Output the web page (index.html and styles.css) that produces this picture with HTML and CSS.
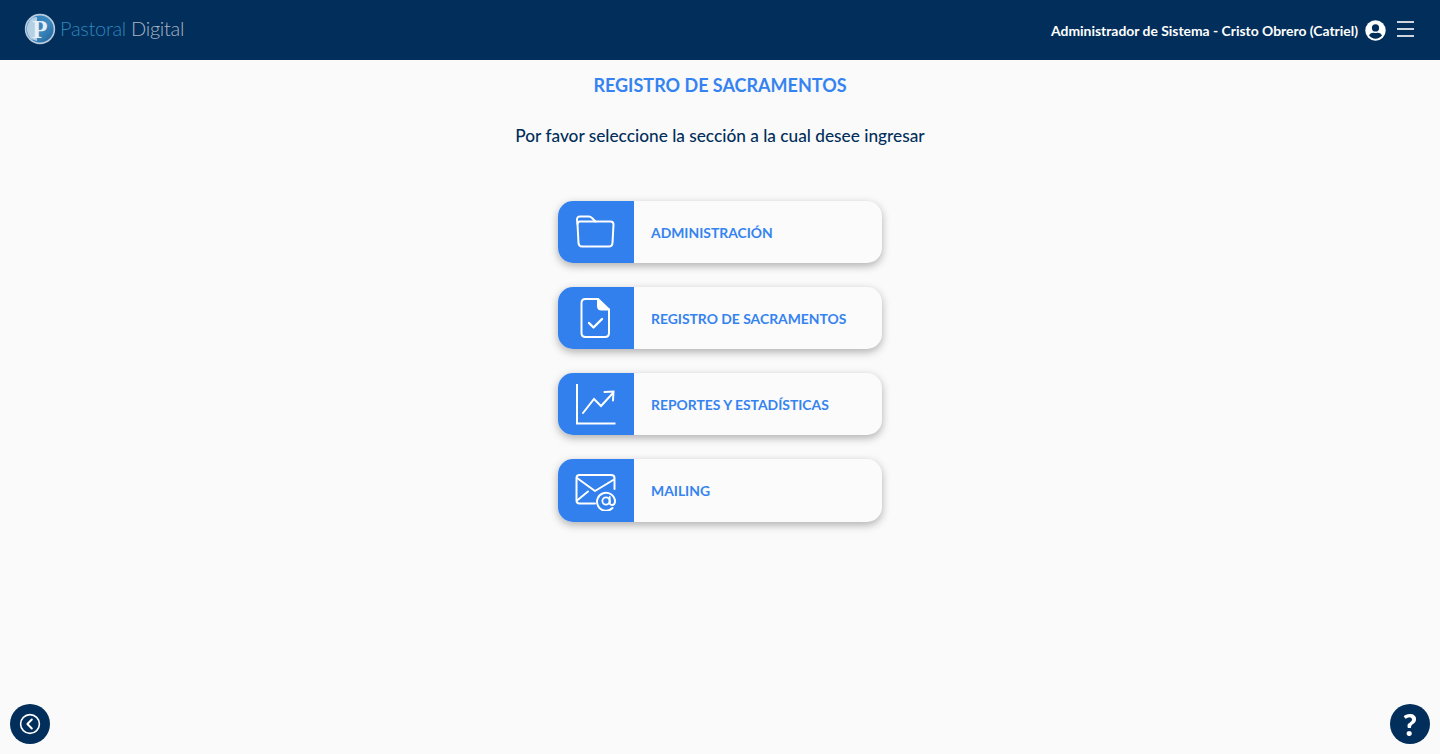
FILE: index.html
```html
<!DOCTYPE html>
<html lang="es">
<head>
	<title>Registro de Sacramentos</title>
	<meta charset="utf-8">
	<link rel="stylesheet" href="styles.css">
</head>
<body>
	<header class="top-bar">
		<div class="logo">
			<svg class="logo-mark" width="32" height="32" viewBox="0 0 32 32">
				<defs>
					<linearGradient id="logoFill" x1="0" y1="0" x2="1" y2="1">
						<stop offset="0" stop-color="#2f80bd"/>
						<stop offset="0.55" stop-color="#3b88c0"/>
						<stop offset="1" stop-color="#1f5f96"/>
					</linearGradient>
				</defs>
				<circle cx="16" cy="16" r="14.4" fill="url(#logoFill)" stroke="#b9cbdc" stroke-width="1.6"/>
				<path d="M9 4.5 A14 14 0 0 0 7 26 L13 28 L13 4 Z" fill="#d5e1ec" opacity="0.8"/>
				<text class="logo-letter" x="16" y="24.5" text-anchor="middle">P</text>
			</svg>
			<span class="logo-text"><span class="logo-blue">Pastoral</span> Digital</span>
		</div>
		<div class="user-box">
			<span class="user-name">Administrador de Sistema - Cristo Obrero (Catriel)</span>
			<svg class="user-icon" width="21" height="21" viewBox="0 0 21 21">
				<circle cx="10.5" cy="10.5" r="10.2" fill="#fff"/>
				<circle cx="10.5" cy="7.9" r="3.6" fill="#012e5a"/>
				<path d="M4 15.6 C5 13 7.5 12.6 8.6 12.8 C9.8 13.2 11.2 13.2 12.4 12.8 C13.5 12.6 16 13 17 15.6 C15.4 17.6 13.1 18.7 10.5 18.7 C7.9 18.7 5.6 17.6 4 15.6 Z" fill="#012e5a"/>
			</svg>
			<button class="menu-btn" aria-label="menu">
				<span></span><span></span><span></span>
			</button>
		</div>
	</header>

	<main class="content">
		<h1 class="page-title">REGISTRO DE SACRAMENTOS</h1>
		<p class="page-sub">Por favor seleccione la sección a la cual desee ingresar</p>

		<div class="card-list">
			<a class="card">
				<span class="card-icon">
					<svg class="icon-folder" width="40" height="33" viewBox="0 0 40 33" fill="none" stroke="#fff" stroke-width="2" stroke-linejoin="round" stroke-linecap="round">
						<path d="M2.5 9 L2 5 Q1.8 1.5 5 1.5 L14 1.5 Q15.5 1.5 17 3 L20.5 6.5 L35.5 6.5 Q38.5 6.5 38.5 9.5 L37.5 28 Q37.3 31.5 34 31.5 L7 31.5 Q3.8 31.5 3.5 28 Z"/>
						<path d="M2.5 9 Q2.5 6.5 5 6.5 L20.5 6.5"/>
					</svg>
				</span>
				<span class="card-label">ADMINISTRACIÓN</span>
			</a>
			<a class="card">
				<span class="card-icon">
					<svg class="icon-doc" width="30" height="40" viewBox="0 0 30 40" fill="none" stroke="#fff" stroke-width="2" stroke-linejoin="round" stroke-linecap="round">
						<path d="M5.5 1 L18 1 L29 11.5 L29 35 Q29 39 25 39 L5.5 39 Q1.5 39 1.5 35 L1.5 5 Q1.5 1 5.5 1 Z"/>
						<path d="M18 1 L18 8 Q18 11.5 21.5 11.5 L29 11.5" fill="#fff"/>
						<path d="M9 25 L13.5 29.5 L22 21" stroke-width="2.4"/>
					</svg>
				</span>
				<span class="card-label">REGISTRO DE SACRAMENTOS</span>
			</a>
			<a class="card">
				<span class="card-icon">
					<svg width="42" height="42" viewBox="0 0 42 42" fill="none" stroke="#fff" stroke-width="2" stroke-linecap="round">
						<path d="M2 1 L2 40.5 L40.5 40.5" stroke-linecap="butt"/>
						<path d="M8 30 L19 16 L26 23 L38 10"/>
						<path d="M29.5 9 L38.5 8.5 L38 17.5"/>
					</svg>
				</span>
				<span class="card-label">REPORTES Y ESTADÍSTICAS</span>
			</a>
			<a class="card">
				<span class="card-icon">
					<svg class="icon-mail" width="42" height="37" viewBox="0 0 42 37" fill="none" stroke="#fff" stroke-width="2" stroke-linejoin="round" stroke-linecap="round">
						<path d="M20 29.5 L4.5 29.5 Q1.5 29.5 1.5 26.5 L1.5 4 Q1.5 1 4.5 1 L36 1 Q39.5 1 39.5 4 L39.5 15"/>
						<path d="M2 4 L20 17 L39 5.5"/>
						<path d="M2 26.5 L13 17.5"/>
						<path d="M37.5 34 A9 9 0 1 1 40 27 Q40 31 37 31 Q34.5 31 34.7 28"/>
						<circle cx="31" cy="27" r="3.6" stroke-width="1.8"/>
						<path d="M34.7 23 L34.7 28" stroke-width="1.8"/>
					</svg>
				</span>
				<span class="card-label">MAILING</span>
			</a>
		</div>
	</main>

	<a class="float-btn back-btn" aria-label="volver">
		<svg width="22" height="22" viewBox="0 0 22 22" fill="none" stroke="#fff" stroke-width="1.6" stroke-linecap="round" stroke-linejoin="round">
			<circle cx="11" cy="11" r="9.4"/>
			<path d="M12.8 6.5 L8.4 11 L12.8 15.5" stroke-width="2"/>
		</svg>
	</a>
	<a class="float-btn help-btn" aria-label="ayuda">?</a>
</body>
</html>
```

FILE: styles.css
```css
*{
	margin: 0;
	padding: 0;
	box-sizing: border-box;
}
html, body{
	height: 100%;
}
body{
	display: flex;
	flex-direction: column;
	background-color: #fafafa;
	font-family: "Lato", "Liberation Sans", sans-serif;
	overflow: hidden;
}
.top-bar{
	display: flex;
	justify-content: space-between;
	align-items: center;
	flex-shrink: 0;
	height: 60px;
	padding: 0 26px 0 24px;
	background-color: #012e5a;
}
.logo{
	display: flex;
	align-items: center;
	gap: 4px;
	margin-top: -2px;
}
.logo-letter{
	font-family: "Liberation Serif", serif;
	font-size: 25px;
	font-weight: bold;
	fill: #e8eff5;
}
.logo-text{
	font-size: 20px;
	font-weight: 300;
	letter-spacing: -0.3px;
	color: #a9b5c2;
	line-height: 20px;
	margin-bottom: 2px;
}
.logo-blue{
	color: #2f86bd;
}
.user-box{
	display: flex;
	align-items: center;
}
.user-name{
	font-size: 13.9px;
	font-weight: 700;
	color: #fff;
	margin-right: 7px;
}
.user-icon{
	margin-right: 11px;
}
.menu-btn{
	display: flex;
	flex-direction: column;
	gap: 5px;
	width: 17px;
	margin-top: -3px;
	background: none;
	border: none;
}
.menu-btn > span{
	display: block;
	height: 2px;
	background-color: #cdd5de;
}
.content{
	display: flex;
	flex-direction: column;
	align-items: center;
	flex-grow: 1;
}
.page-title{
	margin-top: 14px;
	font-size: 18px;
	line-height: 23px;
	font-weight: 700;
	color: #3583f0;
}
.page-sub{
	margin-top: 27px;
	font-size: 17.25px;
	line-height: 23px;
	font-weight: 500;
	color: #012e5a;
}
.card-list{
	display: flex;
	flex-direction: column;
	gap: 24px;
	margin-top: 54px;
}
.card{
	display: flex;
	align-items: stretch;
	width: 324px;
	height: 62px;
	background-color: #fbfbfb;
	border-radius: 15px;
	box-shadow: 0 3px 8px rgba(0, 0, 0, 0.3);
	overflow: hidden;
	cursor: pointer;
}
.card:last-child{
	height: 63px;
}
.card-icon{
	display: flex;
	justify-content: center;
	align-items: center;
	width: 76px;
	background-color: #3180ed;
}
.icon-folder{
	margin: -2px 0 0 -2px;
}
.icon-doc{
	margin-left: -2px;
}
.icon-mail{
	margin-top: 3px;
}
.card-label{
	align-self: center;
	margin-left: 17px;
	font-size: 13.9px;
	font-weight: 700;
	color: #3583f0;
}
.float-btn{
	position: fixed;
	bottom: 10px;
	display: flex;
	justify-content: center;
	align-items: center;
	width: 40px;
	height: 40px;
	border-radius: 50%;
	background-color: #012e5a;
	cursor: pointer;
}
.back-btn{
	left: 10px;
}
.help-btn{
	right: 10px;
	font-size: 31px;
	font-weight: 900;
	color: #fff;
}
```
